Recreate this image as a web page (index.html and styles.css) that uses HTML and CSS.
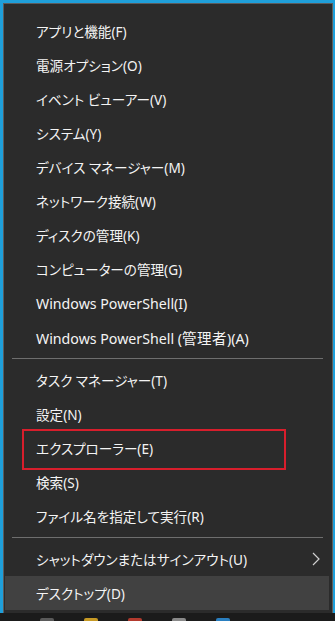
FILE: index.html
```html
<!DOCTYPE html>
<html lang="ja">
<head>
<meta charset="utf-8">
<link rel="stylesheet" href="styles.css">
</head>
<body>
<div class="screen">
  <div class="menu">
    <div class="group">
      <div class="item">アプリと機能(F)</div>
      <div class="item">電源オプション(O)</div>
      <div class="item">イベント ビューアー(V)</div>
      <div class="item">システム(Y)</div>
      <div class="item">デバイス マネージャー(M)</div>
      <div class="item">ネットワーク接続(W)</div>
      <div class="item">ディスクの管理(K)</div>
      <div class="item">コンピューターの管理(G)</div>
      <div class="item"><span class="lat">Windows PowerShell(I)</span></div>
      <div class="item"><span><span class="lat">Windows PowerShell (</span><span class="kan">管理者</span><span class="lat">)(A)</span></span></div>
    </div>
    <div class="sep"></div>
    <div class="group">
      <div class="item">タスク マネージャー(T)</div>
      <div class="item">設定(N)</div>
      <div class="item marked">エクスプローラー(E)</div>
      <div class="item">検索(S)</div>
      <div class="item">ファイル名を指定して実行(R)</div>
    </div>
    <div class="sep"></div>
    <div class="group">
      <div class="item sub"><span>シャットダウンまたはサインアウト(U)</span><svg class="chev" width="8" height="14" viewBox="0 0 8 14"><path d="M1 1 L7 7 L1 13" fill="none" stroke="#d0d0d0" stroke-width="1.2"/></svg></div>
      <div class="item hover">デスクトップ(D)</div>
    </div>
  </div>
  <div class="taskbar">
    <span class="blob b1"></span>
    <span class="blob b2"></span>
    <span class="blob b3"></span>
    <span class="blob b4"></span>
    <span class="blob b5"></span>
  </div>
</div>
</body>
</html>
```
FILE: styles.css
```css
* { box-sizing: border-box; }
html, body { margin: 0; padding: 0; }
body {
  width: 335px;
  height: 621px;
  overflow: hidden;
  background: #1f9fda;
  font-family: "Noto Sans", "Noto Sans CJK JP", sans-serif;
}
.screen {
  display: flex;
  flex-direction: column;
  height: 621px;
}
.menu {
  margin: 3px 2px 0 3px;
  height: 610px;
  background: #2b2b2b;
  border: 1px solid #5c5c5c;
  border-bottom: none;
  padding: 10px 0 0 0;
  display: flex;
  flex-direction: column;
}
.group {
  display: flex;
  flex-direction: column;
}
.item {
  position: relative;
  height: 34px;
  display: flex;
  align-items: center;
  padding-left: 32px;
  padding-right: 10px;
  color: #f4f4f4;
  font-size: 13.6px;
  font-feature-settings: "palt";
  white-space: nowrap;
}
.lat { font-size: 14.2px; }
.kan { font-size: 14.5px; letter-spacing: 0.5px; }
.sub { justify-content: space-between; }
.chev { margin-right: 2px; }
.hover {
  background: #414141;
  margin-right: 3px;
  margin-left: 1px;
  padding-left: 31px;
}
.marked::after {
  content: "";
  position: absolute;
  left: 18px;
  top: -2px;
  width: 260px;
  height: 37px;
  border: 2px solid #d81e2c;
}
.sep {
  height: 9px;
  display: flex;
  align-items: center;
  padding: 0 9px 0 8px;
}
.sep::before {
  content: "";
  flex: 1;
  height: 1px;
  background: #6e6e6e;
}
.taskbar {
  flex: 1;
  background: #1b1b1b;
  position: relative;
  display: flex;
  align-items: flex-end;
  gap: 30px;
  padding-left: 40px;
}
.blob { width: 14px; height: 3px; border-radius: 2px 2px 0 0; }
.b1 { background: #5a5a5a; }
.b2 { background: #c79a25; }
.b3 { background: #b33a2e; }
.b4 { background: #8a8a8a; }
.b5 { background: #2a7fc0; }
```
